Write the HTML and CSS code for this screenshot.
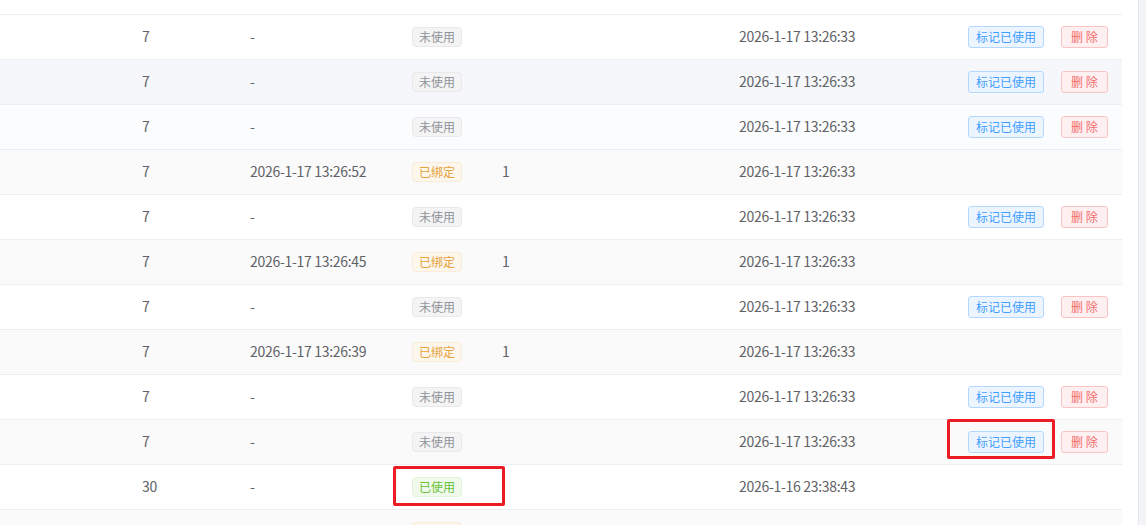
FILE: index.html
```html
<!DOCTYPE html>
<html lang="zh-CN">
<head>
  <meta charset="UTF-8">
  <title>卡密列表</title>
  <link rel="stylesheet" href="styles.css">
</head>
<body>
  <div class="page">
    <div class="table-wrap">
      <table class="list">
        <colgroup>
          <col class="col-id">
          <col class="col-days">
          <col class="col-bind">
          <col class="col-status">
          <col class="col-count">
          <col class="col-created">
          <col class="col-ops">
        </colgroup>
        <tbody>
          <tr class="cut"><td colspan="7"></td></tr>

          <tr>
            <td></td><td>7</td><td>-</td>
            <td><span class="tag tag-info">未使用</span></td>
            <td></td><td>2026-1-17 13:26:33</td>
            <td><button class="btn btn-primary">标记已使用</button><button class="btn btn-danger">删 除</button></td>
          </tr>
          <tr class="striped hover">
            <td></td><td>7</td><td>-</td>
            <td><span class="tag tag-info">未使用</span></td>
            <td></td><td>2026-1-17 13:26:33</td>
            <td><button class="btn btn-primary">标记已使用</button><button class="btn btn-danger">删 除</button></td>
          </tr>
          <tr class="fading">
            <td></td><td>7</td><td>-</td>
            <td><span class="tag tag-info">未使用</span></td>
            <td></td><td>2026-1-17 13:26:33</td>
            <td><button class="btn btn-primary">标记已使用</button><button class="btn btn-danger">删 除</button></td>
          </tr>
          <tr class="striped">
            <td></td><td>7</td><td>2026-1-17 13:26:52</td>
            <td><span class="tag tag-warning">已绑定</span></td>
            <td>1</td><td>2026-1-17 13:26:33</td>
            <td></td>
          </tr>
          <tr>
            <td></td><td>7</td><td>-</td>
            <td><span class="tag tag-info">未使用</span></td>
            <td></td><td>2026-1-17 13:26:33</td>
            <td><button class="btn btn-primary">标记已使用</button><button class="btn btn-danger">删 除</button></td>
          </tr>
          <tr class="striped">
            <td></td><td>7</td><td>2026-1-17 13:26:45</td>
            <td><span class="tag tag-warning">已绑定</span></td>
            <td>1</td><td>2026-1-17 13:26:33</td>
            <td></td>
          </tr>
          <tr>
            <td></td><td>7</td><td>-</td>
            <td><span class="tag tag-info">未使用</span></td>
            <td></td><td>2026-1-17 13:26:33</td>
            <td><button class="btn btn-primary">标记已使用</button><button class="btn btn-danger">删 除</button></td>
          </tr>
          <tr class="striped">
            <td></td><td>7</td><td>2026-1-17 13:26:39</td>
            <td><span class="tag tag-warning">已绑定</span></td>
            <td>1</td><td>2026-1-17 13:26:33</td>
            <td></td>
          </tr>
          <tr>
            <td></td><td>7</td><td>-</td>
            <td><span class="tag tag-info">未使用</span></td>
            <td></td><td>2026-1-17 13:26:33</td>
            <td><button class="btn btn-primary">标记已使用</button><button class="btn btn-danger">删 除</button></td>
          </tr>
          <tr class="striped">
            <td></td><td>7</td><td>-</td>
            <td><span class="tag tag-info">未使用</span></td>
            <td></td><td>2026-1-17 13:26:33</td>
            <td><button class="btn btn-primary">标记已使用</button><button class="btn btn-danger">删 除</button></td>
          </tr>
          <tr>
            <td></td><td>30</td><td>-</td>
            <td><span class="tag tag-success">已使用</span></td>
            <td></td><td>2026-1-16 23:38:43</td>
            <td></td>
          </tr>
          <!-- 下一行只露出标签的上沿 -->
          <tr class="striped">
            <td></td><td></td><td></td>
            <td><span class="tag tag-warning tag-empty"></span></td>
            <td></td><td></td>
            <td></td>
          </tr>
        </tbody>
      </table>

      <!-- 红框标注 -->
      <div class="mark mark-tag"></div>
      <div class="mark mark-btn"></div>
    </div>
    <div class="scrollbar"></div>
  </div>
</body>
</html>
```

FILE: styles.css
```css
body {
  margin: 0;
  padding: 0;
  background: #ffffff;
  font-family: "Noto Sans CJK SC", "Noto Sans", sans-serif;
  color: #606266;
  overflow: hidden;
}

.page {
  display: flex;
  height: 525px;
}

.table-wrap {
  position: relative;
  width: 1138px;
  padding-right: 16px;
  box-sizing: border-box;
}

.scrollbar {
  width: 7px;
  border-left: 1px solid #e4e7ed;
  background: #f3f4f7;
}

.list {
  width: 1122px;
  table-layout: fixed;
  border-collapse: separate;
  border-spacing: 0;
  font-size: 14px;
  letter-spacing: -0.3px;
}

.col-id { width: 132px; }
.col-days { width: 108px; }
.col-bind { width: 162px; }
.col-status { width: 90px; }
.col-count { width: 237px; }
.col-created { width: 229px; }
.col-ops { width: 164px; }

.list td {
  height: 42px;
  padding: 0 10px 2px;
  border-bottom: 1px solid #ebeef5;
  vertical-align: middle;
  line-height: 23px;
  white-space: nowrap;
}

.list tr.cut td {
  height: 14px;
  padding: 0;
}

.list tr.striped td {
  background: #fafafa;
}

.list tr.hover td {
  background: #f5f7fa;
}

.list tr.fading td {
  background: #fbfcfd;
}

.tag {
  display: inline-block;
  height: 20px;
  margin-top: 2px;
  padding: 0 6px;
  line-height: 18px;
  font-size: 12px;
  letter-spacing: 0;
  border: 1px solid;
  border-radius: 4px;
  box-sizing: border-box;
  vertical-align: top;
}

.tag-empty {
  width: 50px;
}

.tag-info {
  background: #f4f4f5;
  border-color: #e9e9eb;
  color: #909399;
}

.tag-warning {
  background: #fdf6ec;
  border-color: #faecd8;
  color: #e6a23c;
}

.tag-success {
  background: #f0f9eb;
  border-color: #e1f3d8;
  color: #67c23a;
}

.btn {
  display: inline-block;
  height: 22px;
  margin-top: 1px;
  padding: 0 7px;
  font-family: inherit;
  font-size: 12px;
  line-height: 20px;
  letter-spacing: 0;
  border: 1px solid;
  border-radius: 3px;
  box-sizing: border-box;
  vertical-align: top;
  cursor: pointer;
}

.btn + .btn {
  margin-left: 17px;
}

.btn-primary {
  background: #ecf5ff;
  border-color: #b3d8ff;
  color: #409eff;
}

.btn-danger {
  background: #fef0f0;
  border-color: #fbc4c4;
  color: #f56c6c;
  padding: 0 9px;
}

.mark {
  position: absolute;
  border: 3px solid #ec1c24;
  border-radius: 2px;
  box-sizing: border-box;
}

.mark-tag {
  left: 393px;
  top: 466px;
  width: 112px;
  height: 40px;
}

.mark-btn {
  left: 947px;
  top: 419px;
  width: 108px;
  height: 40px;
}
```
